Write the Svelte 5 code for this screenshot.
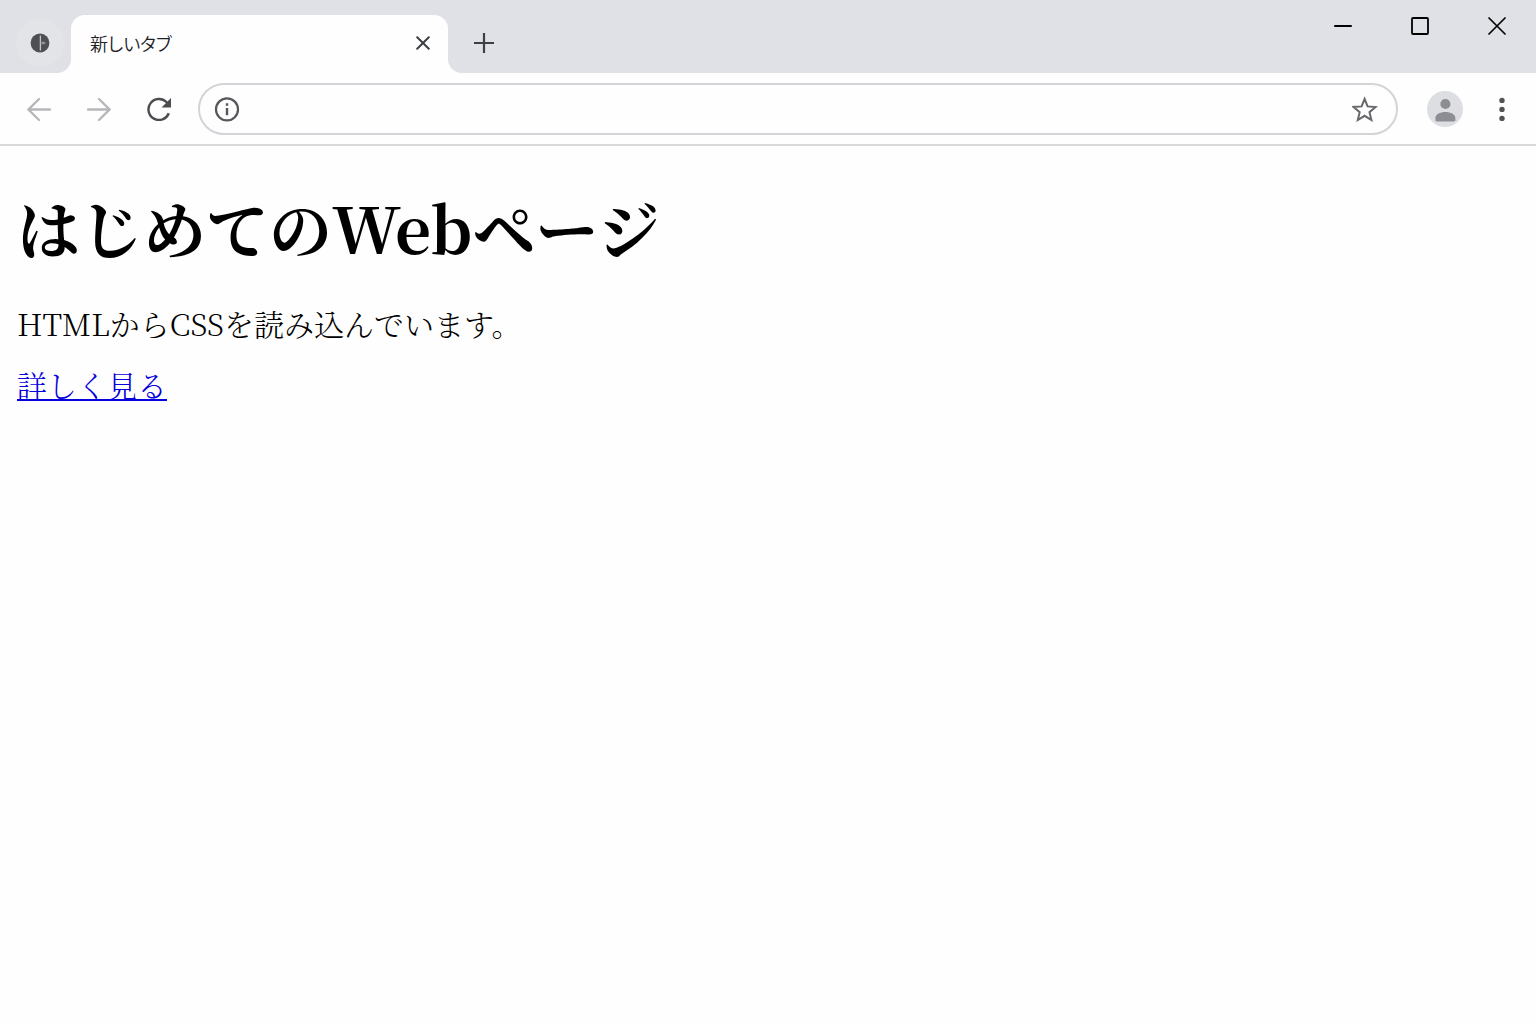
<script>
    let tabTitle = "新しいタブ";
    let address = "";
</script>

<div class="browser">
    <header>
        <div class="tabstrip">
            <div class="strip-start">
                <button class="tab-search" aria-label="タブを検索">
                    <svg width="20" height="20" viewBox="0 0 20 20">
                        <circle cx="10" cy="10" r="9.4" fill="#4d4f53" />
                        <path
                            d="M10.4 2.5v15"
                            stroke="#c4c5c9"
                            stroke-width="1.3"
                        />
                        <path
                            d="M10.5 10h5M13 8.4v3.2"
                            stroke="#96989c"
                            stroke-width="1.3"
                        />
                    </svg>
                </button>
            </div>
            <div class="tab-slot">
                <div class="tab">
                    <span class="title">{tabTitle}</span>
                    <button aria-label="タブを閉じる">
                        <svg width="14" height="14" viewBox="0 0 14 14">
                            <path
                                d="M1.2 1.2l11.6 11.6M12.8 1.2L1.2 12.8"
                                stroke="#3c4043"
                                stroke-width="2"
                                stroke-linecap="round"
                            />
                        </svg>
                    </button>
                </div>
            </div>
            <div class="strip-end">
                <button class="new-tab" aria-label="新しいタブを開く">
                    <svg width="20" height="20" viewBox="0 0 20 20">
                        <path
                            d="M10 0v20M0 10h20"
                            stroke="#3c4043"
                            stroke-width="2.2"
                        />
                    </svg>
                </button>
                <div class="window-controls">
                    <button aria-label="最小化">
                        <svg width="18" height="18" viewBox="0 0 18 18">
                            <path
                                d="M1 9h16"
                                stroke="#000"
                                stroke-width="2"
                                stroke-linecap="round"
                            />
                        </svg>
                    </button>
                    <button aria-label="最大化">
                        <svg width="18" height="18" viewBox="0 0 18 18">
                            <rect
                                x="1"
                                y="1"
                                width="16"
                                height="16"
                                rx="1"
                                fill="none"
                                stroke="#000"
                                stroke-width="1.8"
                            />
                        </svg>
                    </button>
                    <button aria-label="閉じる">
                        <svg width="18" height="18" viewBox="0 0 18 18">
                            <path
                                d="M1 1l16 16M17 1L1 17"
                                stroke="#000"
                                stroke-width="1.7"
                                stroke-linecap="round"
                            />
                        </svg>
                    </button>
                </div>
            </div>
        </div>

        <div class="toolbar">
            <nav>
                <button aria-label="戻る" disabled>
                    <svg width="24" height="24" viewBox="0 0 24 24">
                        <path
                            d="M23 12.5H2M12 2L1.5 12.5 12 23"
                            fill="none"
                            stroke="#b6b7ba"
                            stroke-width="2.3"
                            stroke-linecap="round"
                        />
                    </svg>
                </button>
                <button aria-label="進む" disabled>
                    <svg width="24" height="24" viewBox="0 0 24 24">
                        <path
                            d="M1 12.5h21M12 2L22.5 12.5 12 23"
                            fill="none"
                            stroke="#b6b7ba"
                            stroke-width="2.3"
                            stroke-linecap="round"
                        />
                    </svg>
                </button>
                <button aria-label="再読み込み">
                    <svg width="24" height="24" viewBox="0 0 24 24">
                        <path
                            d="M21.8 16.2A10.5 10.5 0 1 1 19.4 5L21 6.8"
                            fill="none"
                            stroke="#4a4c50"
                            stroke-width="2.4"
                        />
                        <path d="M24 1v9.4h-9.4z" fill="#4a4c50" />
                    </svg>
                </button>
            </nav>
            <div class="omnibox">
                <button aria-label="サイト情報を表示">
                    <svg width="26" height="26" viewBox="0 0 26 26">
                        <circle
                            cx="13"
                            cy="13.4"
                            r="11"
                            fill="none"
                            stroke="#55575b"
                            stroke-width="2.2"
                        />
                        <path
                            d="M13 12v7.2M13 7.2v2.6"
                            stroke="#55575b"
                            stroke-width="2.4"
                        />
                    </svg>
                </button>
                <input type="text" aria-label="アドレス" bind:value={address} />
                <button aria-label="ブックマークに追加">
                    <svg width="26" height="26" viewBox="0 0 26 26">
                        <path
                            d="M12.6 3l3 7.4 8 .6-6.1 5.2 1.9 7.8-6.8-4.2-6.8 4.2 1.9-7.8L1.6 11l8-.6z"
                            fill="none"
                            stroke="#66686c"
                            stroke-width="2"
                        />
                    </svg>
                </button>
            </div>
            <button class="profile" aria-label="プロフィール">
                <svg width="36" height="36" viewBox="0 0 36 36">
                    <circle cx="18" cy="18" r="18" fill="#dddee2" />
                    <circle cx="18.4" cy="13" r="5.1" fill="#8c8e93" />
                    <path
                        d="M8.4 29v-1.8c0-4 4.8-6.2 10-6.2s10 2.2 10 6.2V29c0 1-.6 1.4-1.4 1.4H9.8c-.8 0-1.4-.4-1.4-1.4z"
                        fill="#8c8e93"
                    />
                </svg>
            </button>
            <button aria-label="メニュー">
                <svg width="24" height="26" viewBox="0 0 24 26">
                    <circle cx="12" cy="4.4" r="2.7" fill="#505256" />
                    <circle cx="12" cy="13.4" r="2.7" fill="#505256" />
                    <circle cx="12" cy="22.4" r="2.7" fill="#505256" />
                </svg>
            </button>
        </div>
    </header>

    <main>
        <h1>はじめてのWebページ</h1>
        <p>HTMLからCSSを読み込んでいます。</p>
        <a href="#detail">詳しく見る</a>
    </main>
</div>

<style>
    :global(body) {
        margin: 0;
        background: #fefefe;
    }
    button {
        display: flex;
        align-items: center;
        justify-content: center;
        width: 36px;
        height: 36px;
        padding: 0;
        border: 0;
        border-radius: 50%;
        background: none;
        flex-shrink: 0;
    }
    .tabstrip {
        display: flex;
        height: 73px;
    }
    .strip-start,
    .strip-end {
        display: flex;
        background: #e0e1e6;
    }
    .strip-start {
        box-sizing: border-box;
        width: 71px;
        padding: 19px 0 0 16px;
        border-bottom-right-radius: 14px;
    }
    .tab-search {
        width: 48px;
        height: 48px;
        background: #e3e4e8;
    }
    .tab-slot {
        width: 377px;
        padding-top: 15px;
        background: linear-gradient(#e0e1e6 40px, transparent 40px);
    }
    .tab {
        display: flex;
        align-items: center;
        justify-content: space-between;
        box-sizing: border-box;
        height: 58px;
        padding: 0 7px 2px 19px;
        border-radius: 14px 14px 0 0;
        background: #fefefe;
    }
    .title {
        font-family: "Noto Sans CJK JP", sans-serif;
        font-size: 18px;
        font-weight: 350;
        font-feature-settings: "palt";
        color: #202124;
    }
    .strip-end {
        flex: 1;
        justify-content: space-between;
        border-bottom-left-radius: 14px;
    }
    .new-tab {
        margin: 25px 0 0 18px;
    }
    .window-controls {
        display: flex;
        gap: 41px;
        padding: 8px 21px 0 0;
    }
    .toolbar {
        display: flex;
        align-items: center;
        box-sizing: border-box;
        height: 73px;
        padding: 1px 16px 0 21px;
        border-bottom: 2px solid #d7d8da;
    }
    nav {
        display: flex;
        gap: 24px;
    }
    .omnibox {
        display: flex;
        align-items: center;
        flex: 1;
        box-sizing: border-box;
        height: 52px;
        margin: 0 29px 0 21px;
        padding: 0 13px 0 9px;
        border: 2px solid #d3d4d7;
        border-radius: 26px;
    }
    .omnibox input {
        flex: 1;
        min-width: 0;
        border: 0;
        outline: 0;
        background: none;
        font-family: "Noto Sans CJK JP", sans-serif;
        font-size: 18px;
    }
    .profile {
        margin-right: 21px;
    }
    main {
        padding: 33px 17px;
        font-family: "Noto Serif CJK JP", "Noto Serif JP", "Liberation Serif",
            "Noto Sans CJK JP", serif;
        font-size: 30px;
        font-weight: 300;
        line-height: 44px;
        color: #000;
    }
    h1 {
        margin: 0;
        font-size: 63px;
        font-weight: 700;
        line-height: 96px;
    }
    p {
        margin: 26px 0 17px;
    }
    a {
        color: #0600dc;
        text-decoration-thickness: 2px;
        text-decoration-skip-ink: none;
        text-underline-offset: 2px;
    }
</style>
